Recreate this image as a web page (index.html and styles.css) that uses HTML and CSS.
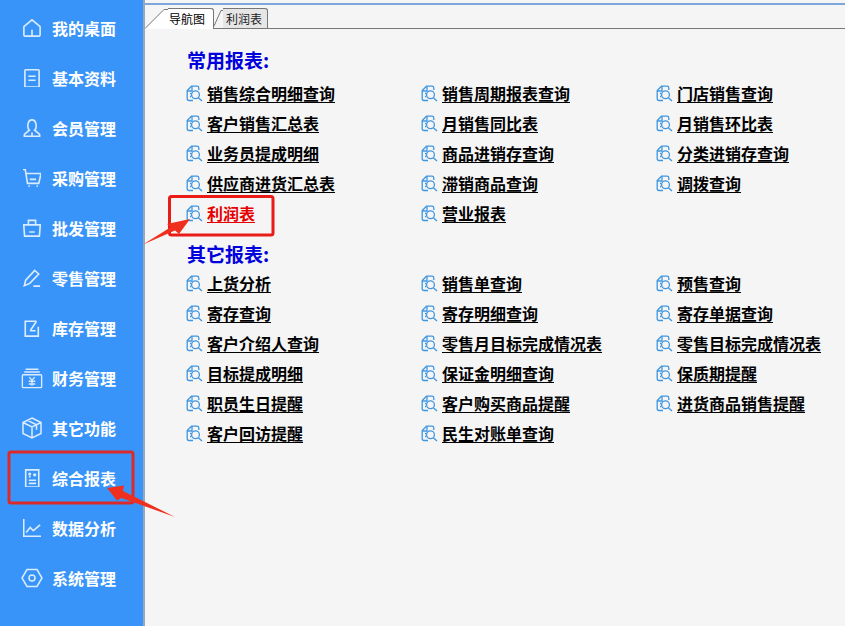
FILE: index.html
```html
<!DOCTYPE html>
<html lang="zh-CN">
<head>
<meta charset="utf-8">
<title>导航图</title>
<link rel="stylesheet" href="styles.css">
</head>
<body>
<svg class="defs" width="0" height="0" aria-hidden="true">
  <symbol id="rp" viewBox="0 0 17 17">
    <path d="M7 15.500H3Q1.200 15.500 1.200 13.700V5.500L5.500 1.200H11Q12.800 1.200 12.800 3V5"/>
    <path d="M1.200 6H6V1.200"/>
    <circle cx="9.500" cy="9.800" r="3.900"/>
    <path d="M12.400 12.700L16 16"/>
    <path d="M4 8.500H5.200M4 11.500H5.200"/>
  </symbol>
</svg>
<div class="app">
  <nav class="side">
    <a class="nav"><svg class="ni" viewBox="0 0 20 20"><path d="M1 8.500L10 .9l9 7.600v9.200q0 1.300-1.300 1.300H2.300q-1.300 0-1.300-1.300zM10 12v7"/></svg>我的桌面</a>
    <a class="nav"><svg class="ni" viewBox="0 0 20 20"><path d="M3 .9h14q.9 0 .9.900v17.400q0 .9-.9.900H3q-.9 0-.9-.9V1.800q0-.9.900-.9zM6 8h8M6 12.500h8"/></svg>基本资料</a>
    <a class="nav"><svg class="ni" viewBox="0 0 20 20"><path d="M7 12.500C4.500 10.500 4.500 1 10 1s5.500 9.500 3 11.500l5.500 4.500v2.300H1.500V17zM10 15v4"/></svg>会员管理</a>
    <a class="nav"><svg class="ni" viewBox="0 0 20 20"><path d="M0 .5h2.500L5 16h12.500L20 5H3M7.500 11.500h7"/><path d="M6 19h1.500M15 19h1.500"/></svg>采购管理</a>
    <a class="nav"><svg class="ni" viewBox="0 0 20 20"><path d="M.8 6.500h18.400l-1 12.500H1.800zM6 6.500V1.500h8v5M7 14.500h6"/></svg>批发管理</a>
    <a class="nav"><svg class="ni" viewBox="0 0 20 20"><path d="M1.500 18.500l1.500-6L13 1.500l4.500 4L7.500 16zM11.500 19h7.500"/></svg>零售管理</a>
    <a class="nav"><svg class="ni" viewBox="0 0 20 20"><path d="M15 2.500H2.500v16.500H17V8.500M8 13h6M8 13l7-10.500"/></svg>库存管理</a>
    <a class="nav"><svg class="ni wide" viewBox="0 0 24 24"><path d="M5 2.500h14M3.500 5.500h17M2.500 8.500h19q1 0 1 1v12q0 1-1 1h-19q-1 0-1-1v-12q0-1 1-1zM9 11l3 3.500 3-3.500M8.500 15.500h7M8.500 18.500h7M12 14.500v6"/></svg>财务管理</a>
    <a class="nav"><svg class="ni wide" viewBox="0 0 22 22"><path d="M11 1l9 4.500v11L11 21l-9-4.500v-11zM2 5.500l9 4.500 9-4.500M11 10v11M6.500 3.300l9 4.500v5"/></svg>其它功能</a>
    <a class="nav"><svg class="ni" viewBox="0 0 20 20"><path d="M3 1h14.500v19H3zM6.500 8.500h2M6.500 12.500h8M6.500 16h8"/><circle cx="13" cy="6.500" r="1"/><circle cx="7.500" cy="5.500" r=".8"/></svg>综合报表</a>
    <a class="nav"><svg class="ni" viewBox="0 0 20 20"><path d="M.8 0v19.200H20M3.500 15l4.500-5.500 3.500 3.500 7.500-6.500"/></svg>数据分析</a>
    <a class="nav"><svg class="ni wide" viewBox="0 0 22 22"><path d="M6 2.500h10l5 8.500-5 8.500H6L1 11z"/><circle cx="11" cy="11" r="3"/></svg>系统管理</a>
  </nav>
  <main class="main">
    <div class="tabs">
      <svg class="slant" viewBox="0 0 23 24" width="23" height="24"><path d="M0 23.500L19 4.500h4V24H0z" class="slant-fill"/><path d="M0 23.500L19 4.500h4"/></svg>
      <div class="tab on">导航图</div>
      <svg class="slant2" viewBox="0 0 9 20" width="9" height="20"><path d="M0 18L7 2.500h2"/></svg>
      <div class="tab">利润表</div>
    </div>
    <section class="content">
      <h2 class="head">常用报表:</h2>
      <div class="grid">
        <a class="lnk"><svg class="ri"><use href="#rp"/></svg><u>销售综合明细查询</u></a>
        <a class="lnk"><svg class="ri"><use href="#rp"/></svg><u>销售周期报表查询</u></a>
        <a class="lnk"><svg class="ri"><use href="#rp"/></svg><u>门店销售查询</u></a>
        <a class="lnk"><svg class="ri"><use href="#rp"/></svg><u>客户销售汇总表</u></a>
        <a class="lnk"><svg class="ri"><use href="#rp"/></svg><u>月销售同比表</u></a>
        <a class="lnk"><svg class="ri"><use href="#rp"/></svg><u>月销售环比表</u></a>
        <a class="lnk"><svg class="ri"><use href="#rp"/></svg><u>业务员提成明细</u></a>
        <a class="lnk"><svg class="ri"><use href="#rp"/></svg><u>商品进销存查询</u></a>
        <a class="lnk"><svg class="ri"><use href="#rp"/></svg><u>分类进销存查询</u></a>
        <a class="lnk"><svg class="ri"><use href="#rp"/></svg><u>供应商进货汇总表</u></a>
        <a class="lnk"><svg class="ri"><use href="#rp"/></svg><u>滞销商品查询</u></a>
        <a class="lnk"><svg class="ri"><use href="#rp"/></svg><u>调拨查询</u></a>
        <a class="lnk red"><svg class="ri"><use href="#rp"/></svg><u>利润表</u></a>
        <a class="lnk"><svg class="ri"><use href="#rp"/></svg><u>营业报表</u></a>
      </div>
      <h2 class="head second">其它报表:</h2>
      <div class="grid">
        <a class="lnk"><svg class="ri"><use href="#rp"/></svg><u>上货分析</u></a>
        <a class="lnk"><svg class="ri"><use href="#rp"/></svg><u>销售单查询</u></a>
        <a class="lnk"><svg class="ri"><use href="#rp"/></svg><u>预售查询</u></a>
        <a class="lnk"><svg class="ri"><use href="#rp"/></svg><u>寄存查询</u></a>
        <a class="lnk"><svg class="ri"><use href="#rp"/></svg><u>寄存明细查询</u></a>
        <a class="lnk"><svg class="ri"><use href="#rp"/></svg><u>寄存单据查询</u></a>
        <a class="lnk"><svg class="ri"><use href="#rp"/></svg><u>客户介绍人查询</u></a>
        <a class="lnk"><svg class="ri"><use href="#rp"/></svg><u>零售月目标完成情况表</u></a>
        <a class="lnk"><svg class="ri"><use href="#rp"/></svg><u>零售目标完成情况表</u></a>
        <a class="lnk"><svg class="ri"><use href="#rp"/></svg><u>目标提成明细</u></a>
        <a class="lnk"><svg class="ri"><use href="#rp"/></svg><u>保证金明细查询</u></a>
        <a class="lnk"><svg class="ri"><use href="#rp"/></svg><u>保质期提醒</u></a>
        <a class="lnk"><svg class="ri"><use href="#rp"/></svg><u>职员生日提醒</u></a>
        <a class="lnk"><svg class="ri"><use href="#rp"/></svg><u>客户购买商品提醒</u></a>
        <a class="lnk"><svg class="ri"><use href="#rp"/></svg><u>进货商品销售提醒</u></a>
        <a class="lnk"><svg class="ri"><use href="#rp"/></svg><u>客户回访提醒</u></a>
        <a class="lnk"><svg class="ri"><use href="#rp"/></svg><u>民生对账单查询</u></a>
      </div>
    </section>
  </main>
  <svg class="marks" viewBox="0 0 845 626" width="845" height="626" aria-hidden="true">
    <rect class="box1" x="169.500" y="196.500" width="103.500" height="38.500" rx="2"/>
    <rect class="box2" x="9" y="452" width="124" height="51" rx="2"/>
    <path class="arrow" d="M143 244.500L171 227 167 224 190 219 179 234 175 230.500z"/>
    <path class="arrow" d="M175 517L121.500 498 117 500.500 107 488 124 485.500 123 491z"/>
  </svg>
</div>
</body>
</html>
```
FILE: styles.css
```css
* { box-sizing: border-box; }
html, body { margin: 0; padding: 0; }
body {
  width: 845px;
  height: 626px;
  overflow: hidden;
  font-family: "Noto Sans CJK SC", "Liberation Sans", sans-serif;
  background: #f5f5f5;
}
.defs { position: absolute; }
.app { position: relative; display: flex; width: 845px; height: 626px; overflow: hidden; }

.side {
  width: 145px;
  flex: none;
  padding-top: 3px;
  background: #3894f8;
  border-right: 2px solid #9aa7b8;
}
.nav {
  display: flex;
  align-items: center;
  height: 50px;
  padding-left: 23px;
  color: #fff;
  font-size: 16px;
  font-weight: 700;
}
.ni {
  width: 18px;
  height: 18px;
  margin-right: 11px;
  flex: none;
  fill: none;
  stroke: #dcecff;
  stroke-width: 1.800;
}
.ni.wide { width: 22px; height: 22px; margin-left: -2px; margin-right: 9px; stroke-width: 1.500; }

.main { flex: 1; display: flex; flex-direction: column; min-width: 0; }
.tabs {
  display: flex;
  align-items: flex-end;
  height: 26px;
  margin-top: 3px;
  padding-left: 0;
  background: #f5f5f5;
  border-top: 2px solid #7ea6dc;
  border-bottom: 1px solid #777;
}
.slant { flex: none; margin-bottom: -1px; fill: none; stroke: #777; }
.slant-fill { fill: #fff; stroke: none; }
.slant2 { flex: none; fill: none; stroke: #777; }
.tab {
  height: 20px;
  padding: 0 5px 0 3px;
  font-size: 12px;
  line-height: 19px;
  color: #222;
  background: #e6e6e6;
  border: 1px solid #777;
  border-left: 0;
  border-bottom: 0;
  border-radius: 0 3px 0 0;
}
.tab.on { height: 21px; margin-bottom: -1px; padding: 0 8px 0 1px; background: #fff; color: #000; }

.content { padding: 19px 0 0 41px; }
.head {
  margin: 0;
  padding-left: 1px;
  height: 30px;
  line-height: 24px;
  font-size: 19px;
  font-weight: 700;
  color: #0000dc;
}
.head.second { height: 26px; margin-top: 14px; }
.grid { display: grid; grid-template-columns: 235px 235px 170px; grid-auto-rows: 30px; }
.lnk {
  display: flex;
  align-items: center;
  font-size: 16px;
  font-weight: 700;
  color: #000;
}
.lnk u { text-underline-offset: 2px; }
.lnk.red { color: #e60000; }
.ri {
  width: 17px;
  height: 17px;
  margin-right: 4px;
  flex: none;
  fill: none;
  stroke: #3f96e0;
  stroke-width: 1.300;
}
.marks { position: absolute; left: 0; top: 0; pointer-events: none; }
.box1 { fill: none; stroke: #ea1c17; stroke-width: 3; }
.box2 { fill: none; stroke: #dc2a2a; stroke-width: 3; }
.arrow { fill: #f0301f; }
```
